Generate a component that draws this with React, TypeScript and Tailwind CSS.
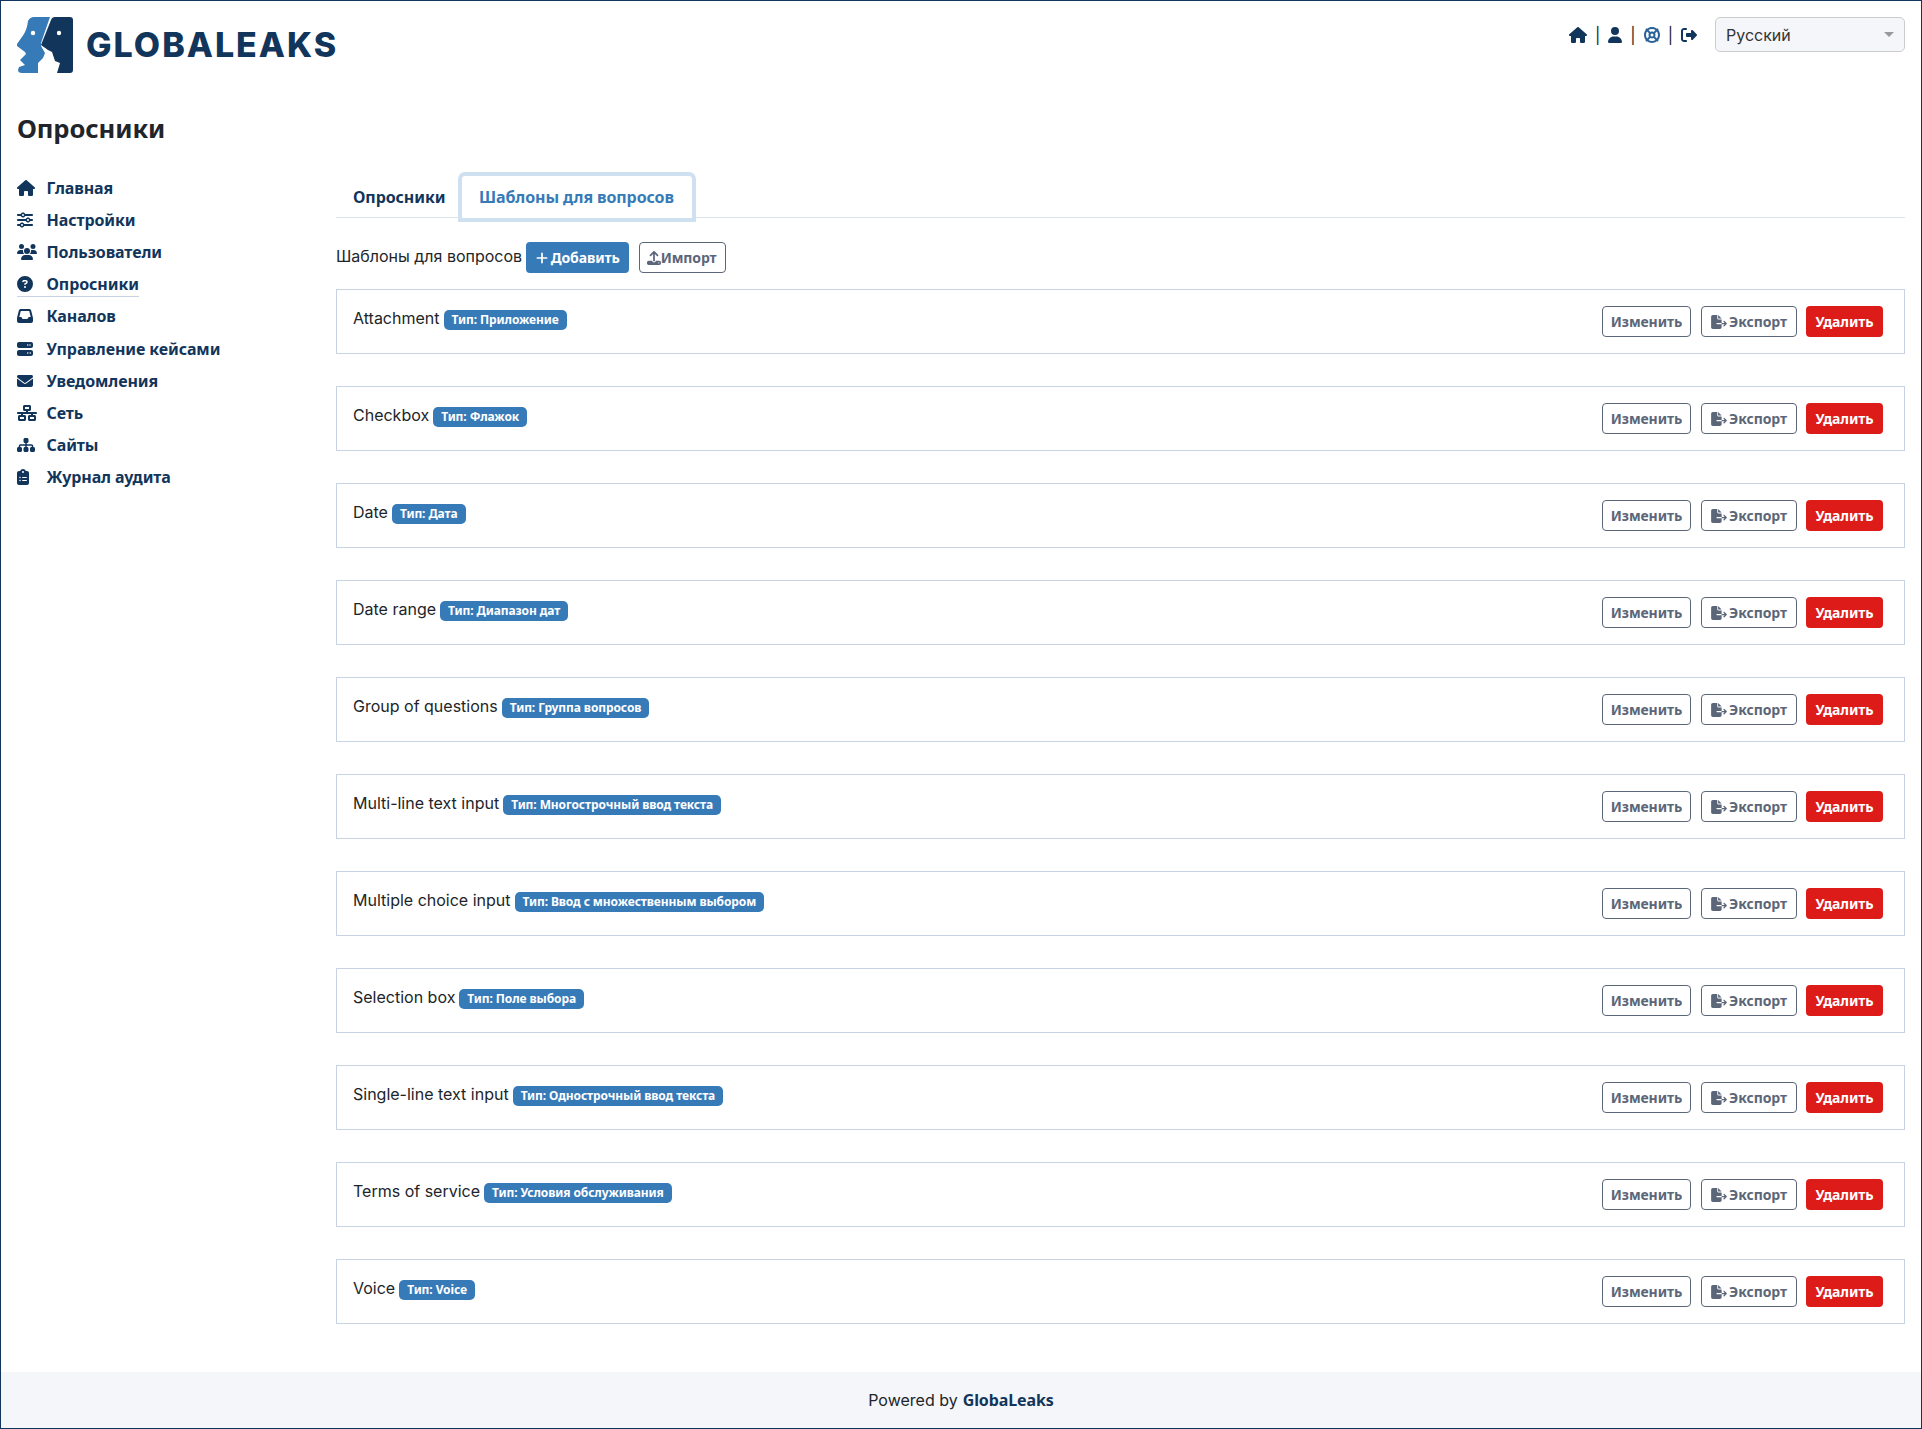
import React from 'react';
import {
  FaHouse,
  FaSliders,
  FaUsers,
  FaCircleQuestion,
  FaInbox,
  FaServer,
  FaEnvelope,
  FaNetworkWired,
  FaSitemap,
  FaClipboardList,
  FaUser,
  FaLifeRing,
  FaRightFromBracket,
  FaPlus,
  FaFileExport,
  FaUpload,
} from 'react-icons/fa6';

const navItems = [
  { label: 'Главная', icon: FaHouse, size: 'h-[16px] w-[18px]' },
  { label: 'Настройки', icon: FaSliders, size: 'h-[16px] w-[16px]' },
  { label: 'Пользователи', icon: FaUsers, size: 'h-[16px] w-[20px]' },
  { label: 'Опросники', icon: FaCircleQuestion, size: 'h-[16px] w-[16px]', active: true },
  { label: 'Каналов', icon: FaInbox, size: 'h-[16px] w-[16px]' },
  { label: 'Управление кейсами', icon: FaServer, size: 'h-[16px] w-[16px]' },
  { label: 'Уведомления', icon: FaEnvelope, size: 'h-[16px] w-[16px]' },
  { label: 'Сеть', icon: FaNetworkWired, size: 'h-[16px] w-[20px]' },
  { label: 'Сайты', icon: FaSitemap, size: 'h-[16px] w-[18px]' },
  { label: 'Журнал аудита', icon: FaClipboardList, size: 'h-[16px] w-[12px]' },
];

const templates = [
  { name: 'Attachment', type: 'Приложение' },
  { name: 'Checkbox', type: 'Флажок' },
  { name: 'Date', type: 'Дата' },
  { name: 'Date range', type: 'Диапазон дат' },
  { name: 'Group of questions', type: 'Группа вопросов' },
  { name: 'Multi-line text input', type: 'Многострочный ввод текста' },
  { name: 'Multiple choice input', type: 'Ввод с множественным выбором' },
  { name: 'Selection box', type: 'Поле выбора' },
  { name: 'Single-line text input', type: 'Однострочный ввод текста' },
  { name: 'Terms of service', type: 'Условия обслуживания' },
  { name: 'Voice', type: 'Voice' },
];

const boldFont = "font-['Noto_Sans','Inter',sans-serif] tracking-[-0.1px]";

const Logo: React.FC = () => (
  <div className="flex h-[56px] items-center gap-[13px]">
    <svg width="56" height="56" viewBox="0 0 56 56">
      <path
        d="M33 0 L17 0 Q13 0 11 4 Q10 12 7 17 L0 27 L0 29 L8 35 L9 37 L3 43 L8 48 L2 50 L1 53 Q1 56 5 56 L21 56 L21 46 L26 41 L28 36 L24 29 L24 26 Z"
        fill="#377ab8"
      />
      <path
        d="M53 0 L38 0 Q35 0 34 3 L24 28 L31 33 L35 35 L38 44 L43 46 L40 56 L53 56 Q56 56 56 53 L56 3 Q56 0 53 0 Z"
        fill="#12355b"
      />
      <circle cx="16" cy="16" r="2.2" fill="#fff" />
      <circle cx="42" cy="16" r="2.2" fill="#fff" />
    </svg>
    <span className="font-['Inter',sans-serif] text-[34px] font-extrabold leading-none tracking-[2px] text-[#12355b]">GLOBALEAKS</span>
  </div>
);

const TemplateRow: React.FC<{ name: string; type: string }> = ({ name, type }) => (
  <div className="mb-[32px] flex h-[65px] items-start justify-between border border-[#c8d3e3] pl-[16px] pr-[21px]">
    <div className="mt-[16px] flex items-start gap-[4px] text-[16px] leading-[24px] text-[#212529]">
      <span>{name}</span>
      <span className={`${boldFont} mt-[4px] rounded-[5px] bg-[#377ab8] px-[8px] text-[12px] font-bold leading-[20px] text-white`}>Тип: {type}</span>
    </div>
    <div className={`${boldFont} mt-[16px] flex items-center text-[14px] font-bold`}>
      <button className="flex h-[31px] w-[89px] items-center justify-center rounded-[4px] border border-[#5c6679] text-[#5c6679]">Изменить</button>
      <button className="ml-[10px] flex h-[31px] w-[96px] items-center justify-center gap-[2px] rounded-[4px] border border-[#5c6679] text-[#5c6679]">
        <FaFileExport className="h-[14px] w-[16px]" />
        Экспорт
      </button>
      <button className="ml-[9px] flex h-[31px] w-[77px] items-center justify-center rounded-[4px] bg-[#dd1c1a] text-white">Удалить</button>
    </div>
  </div>
);

const App: React.FC = () => {
  return (
    <div className="flex min-h-[1429px] w-full flex-col border border-[#12355b] bg-white font-['Inter',sans-serif] text-[#212529]">
      <div className="flex flex-1 flex-col">
        <header className="flex items-start justify-between pl-[16px] pr-[16px] pt-[16px]">
          <Logo />
          <div className="flex items-center">
            <div className="mr-[18px] flex items-center gap-[8px] text-[16px] text-[#12355b]">
              <FaHouse className="h-[16px] w-[18px]" />
              <span className="text-[#212529]">|</span>
              <FaUser className="h-[16px] w-[14px]" />
              <span className="text-[#212529]">|</span>
              <FaLifeRing className="h-[16px] w-[16px] text-[#2a6399]" />
              <span className="text-[#212529]">|</span>
              <FaRightFromBracket className="h-[16px] w-[16px]" />
            </div>
            <div className="flex h-[35px] w-[190px] items-center justify-between rounded-[5px] border border-[#ccc] bg-[#f4f6fa] px-[10px] text-[16px] text-[#333]">
              Русский
              <span className="h-0 w-0 border-x-[5px] border-t-[5px] border-x-transparent border-t-[#999]" />
            </div>
          </div>
        </header>

        <h1 className={`${boldFont} ml-[16px] mt-[38px] text-[25.6px] font-bold leading-[36px] text-[#212529]`}>Опросники</h1>

        <div className="mt-[25px] flex pr-[16px]">
          <nav className={`${boldFont} ml-[16px] w-[319px] shrink-0 text-[16px] font-bold text-[#12355b]`}>
            {navItems.map((item) => (
              <div key={item.label} className="flex h-[32.1px] items-center">
                <div className={`flex h-[26px] items-center ${item.active ? 'border-b border-[#c8d3e3]' : ''}`}>
                  <span className="w-[29.5px]">
                    <item.icon className={item.size} />
                  </span>
                  {item.label}
                </div>
              </div>
            ))}
          </nav>

          <main className="min-w-0 flex-1">
            <div className="flex h-[46px] items-start border-b border-[#dde3ec]">
              <div className={`${boldFont} flex h-[46px] w-[122px] items-center pl-[17px] pt-[4px] text-[16px] font-bold text-[#12355b]`}>Опросники</div>
              <div className={`${boldFont} flex h-[50px] w-[238px] items-center rounded-t-[7px] border-[4px] border-[#cfe0f1] bg-white pl-[17px] text-[16px] font-bold text-[#377ab8]`}>Шаблоны для вопросов</div>
            </div>

            <div className="mb-[16px] mt-[24px] flex h-[31px] items-start text-[16px] leading-[24px]">
              <span className="mt-[2px]">Шаблоны для вопросов</span>
              <button className={`${boldFont} ml-[4px] flex h-[31px] w-[103px] items-center justify-center gap-[3px] rounded-[4px] bg-[#377ab8] text-[14px] font-bold text-white`}>
                <FaPlus className="h-[14px] w-[12px]" />
                Добавить
              </button>
              <button className={`${boldFont} ml-[10px] flex h-[31px] w-[87px] items-center justify-center rounded-[4px] border border-[#5c6679] pr-[2px] text-[14px] font-bold text-[#5c6679]`}>
                <FaUpload className="h-[14px] w-[14px]" />
                Импорт
              </button>
            </div>

            {templates.map((t) => (
              <TemplateRow key={t.name} name={t.name} type={t.type} />
            ))}
          </main>
        </div>
      </div>

      <footer className="flex h-[56px] items-center justify-center bg-[#f4f6fa] text-[16px] text-[#212529]">
        <span>Powered by</span>
        <span className={`${boldFont} ml-[5px] font-bold text-[#12355b]`}>GlobaLeaks</span>
      </footer>
    </div>
  );
};

export default App;
